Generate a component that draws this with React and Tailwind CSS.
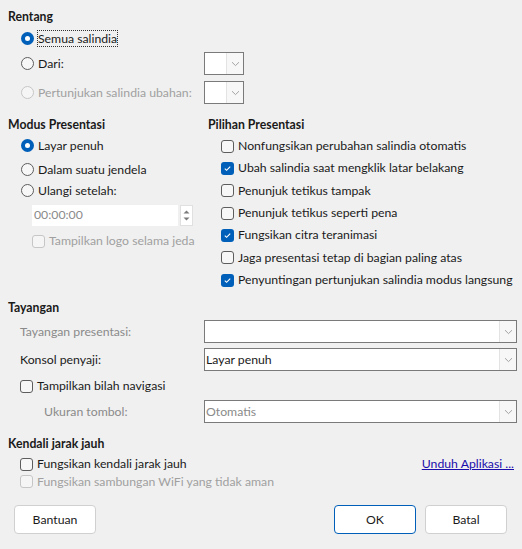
import React from 'react';

const Radio = ({ checked, disabled }) => (
  <span
    className={`w-[13px] h-[13px] rounded-full shrink-0 flex items-center justify-center ${
      checked
        ? 'bg-[#005fb8]'
        : disabled
        ? 'border border-[#c6c6c6] bg-[#f5f5f5]'
        : 'border border-[#5d5d5d] bg-[#f7f7f7]'
    }`}
  >
    {checked && <span className="w-[5px] h-[5px] rounded-full bg-white" />}
  </span>
);

const Check = ({ checked, disabled }) => (
  <span
    className={`w-[13px] h-[13px] rounded-[3px] shrink-0 flex items-center justify-center ${
      checked
        ? 'bg-[#005fb8]'
        : disabled
        ? 'border border-[#c6c6c6] bg-[#f5f5f5]'
        : 'border border-[#5d5d5d] bg-[#f7f7f7]'
    }`}
  >
    {checked && (
      <svg width="9" height="9" viewBox="0 0 9 9">
        <path d="M1.8 4.6 L3.6 6.3 L7.2 2.6" fill="none" stroke="white" strokeWidth="1.1" />
      </svg>
    )}
  </span>
);

const Chevron = () => (
  <svg width="9" height="6" viewBox="0 0 9 6">
    <path d="M1 1.2 L4.5 4.6 L8 1.2" fill="none" stroke="#9a9a9a" strokeWidth="0.9" />
  </svg>
);

const Select = ({ value, disabled, className = '' }) => (
  <div className={`h-[23px] bg-white border border-[#7a7a7a] flex items-stretch shrink-0 ${className}`}>
    <div className={`flex-1 flex items-center pl-[1px] ${disabled ? 'text-[#8a8a8a]' : 'text-[#1a1a1a]'}`}>
      {value}
    </div>
    <div className="w-[17px] bg-[#f7f7f7] border-l border-[#e3e3e3] flex items-center justify-center">
      <Chevron />
    </div>
  </div>
);

const Title = ({ children, className = '' }) => (
  <div className={`h-[16px] leading-[16px] font-bold text-[#1a1a1a] whitespace-nowrap ${className}`}>{children}</div>
);

const RadioRow = ({ label, checked, disabled, focus, className = '' }) => (
  <div className={`h-[20px] flex items-center gap-[4px] whitespace-nowrap ${className}`}>
    <Radio checked={checked} disabled={disabled} />
    <span
      className={`leading-[15px] ${disabled ? 'text-[#a0a0a0]' : 'text-[#1a1a1a]'} ${
        focus ? 'outline outline-1 outline-dotted outline-[#333]' : ''
      }`}
    >
      {label}
    </span>
  </div>
);

const CheckRow = ({ label, checked, disabled, className = '' }) => (
  <div className={`flex items-center gap-[4px] whitespace-nowrap ${className}`}>
    <Check checked={checked} disabled={disabled} />
    <span className={disabled ? 'text-[#a0a0a0]' : 'text-[#1a1a1a]'}>{label}</span>
  </div>
);

const Button = ({ children, primary, className = '' }) => (
  <button
    className={`h-[29px] w-[82px] rounded-[4px] bg-white text-[#1a1a1a] ${
      primary ? 'border border-[#005fb8]' : 'border border-[#d0d0d0]'
    } ${className}`}
  >
    {children}
  </button>
);

export default function App() {
  const options = [
    ['Nonfungsikan perubahan salindia otomatis', false],
    ['Ubah salindia saat mengklik latar belakang', true],
    ['Penunjuk tetikus tampak', false],
    ['Penunjuk tetikus seperti pena', false],
    ['Fungsikan citra teranimasi', true],
    ['Jaga presentasi tetap di bagian paling atas', false],
    ['Penyuntingan pertunjukan salindia modus langsung', true],
  ];

  return (
    <div
      className="w-[522px] h-[549px] bg-[#f0f0f0] text-[12.25px] overflow-hidden flex flex-col pl-[8px] pr-[5px]"
      style={{ fontFamily: 'Lato, "Noto Sans", sans-serif' }}
    >
      {/* Rentang */}
      <Title className="mt-[9px]">Rentang</Title>
      <RadioRow className="mt-[3px] pl-[13px]" label="Semua salindia" checked focus />
      <div className="mt-[4px] flex items-center h-[23px] pl-[13px]">
        <div className="w-[183px]">
          <RadioRow label="Dari:" />
        </div>
        <Select className="w-[40px]" />
      </div>
      <div className="mt-[6px] flex items-center h-[23px] pl-[13px]">
        <div className="w-[183px]">
          <RadioRow label="Pertunjukan salindia ubahan:" disabled />
        </div>
        <Select className="w-[40px]" />
      </div>

      {/* Modus / Pilihan */}
      <div className="mt-[13px] flex">
        <div className="w-[200px] flex flex-col">
          <Title>Modus Presentasi</Title>
          <RadioRow className="mt-[2px] pl-[13px]" label="Layar penuh" checked />
          <RadioRow className="mt-[4px] pl-[13px]" label="Dalam suatu jendela" />
          <RadioRow className="mt-[1px] pl-[13px]" label="Ulangi setelah:" />
          <div className="mt-[5px] ml-[24px] flex items-center h-[21px]">
            <div className="w-[146px] h-[21px] bg-white flex items-center pl-[2px] text-[#8a8a8a]">
              00:00:00
            </div>
            <div className="ml-[2px] w-[13px] h-[21px] bg-white border border-[#e0e0e0] flex flex-col items-center justify-center gap-[3px]">
              <svg width="7" height="4" viewBox="0 0 7 4">
                <path d="M0.5 3.5 L3.5 0.5 L6.5 3.5 Z" fill="#7a7a7a" />
              </svg>
              <svg width="7" height="4" viewBox="0 0 7 4">
                <path d="M0.5 0.5 L3.5 3.5 L6.5 0.5 Z" fill="#7a7a7a" />
              </svg>
            </div>
          </div>
          <CheckRow className="mt-[5px] ml-[24px] h-[20px]" label="Tampilkan logo selama jeda" disabled />
        </div>
        <div className="flex flex-col">
          <Title>Pilihan Presentasi</Title>
          <div className="mt-[2px] flex flex-col pl-[13px]">
            {options.map(([label, checked]) => (
              <CheckRow key={label} className="h-[22.33px]" label={label} checked={checked} />
            ))}
          </div>
        </div>
      </div>

      {/* Tayangan */}
      <Title className="mt-[9px]">Tayangan</Title>
      <div className="mt-[4px] flex items-center h-[23px] pl-[12px] whitespace-nowrap">
        <span className="w-[184px] text-[#8a8a8a]">Tayangan presentasi:</span>
        <Select className="flex-1" disabled />
      </div>
      <div className="mt-[5px] flex items-center h-[23px] pl-[12px] whitespace-nowrap">
        <span className="w-[184px] text-[#1a1a1a]">Konsol penyaji:</span>
        <Select className="flex-1" value="Layar penuh" />
      </div>
      <CheckRow className="mt-[5px] h-[20px] pl-[12px]" label="Tampilkan bilah navigasi" />
      <div className="mt-[4px] flex items-center h-[23px] pl-[36px] whitespace-nowrap">
        <span className="w-[160px] text-[#8a8a8a]">Ukuran tombol:</span>
        <Select className="flex-1" value="Otomatis" disabled />
      </div>

      {/* Kendali jarak jauh */}
      <Title className="mt-[13px]">Kendali jarak jauh</Title>
      <div className="mt-[3px] h-[18px] flex items-center justify-between pl-[12px] pr-[3px]">
        <CheckRow label="Fungsikan kendali jarak jauh" />
        <a className="text-[#1a0dab] underline cursor-pointer whitespace-nowrap">Unduh Aplikasi ...</a>
      </div>
      <CheckRow className="h-[17px] pl-[12px]" label="Fungsikan sambungan WiFi yang tidak aman" disabled />

      {/* Buttons */}
      <div className="mt-[15px] flex items-center pl-[6px]">
        <Button>Bantuan</Button>
        <div className="flex-1" />
        <Button primary>OK</Button>
        <Button className="ml-[9px] mr-[10px]">Batal</Button>
      </div>
    </div>
  );
}
